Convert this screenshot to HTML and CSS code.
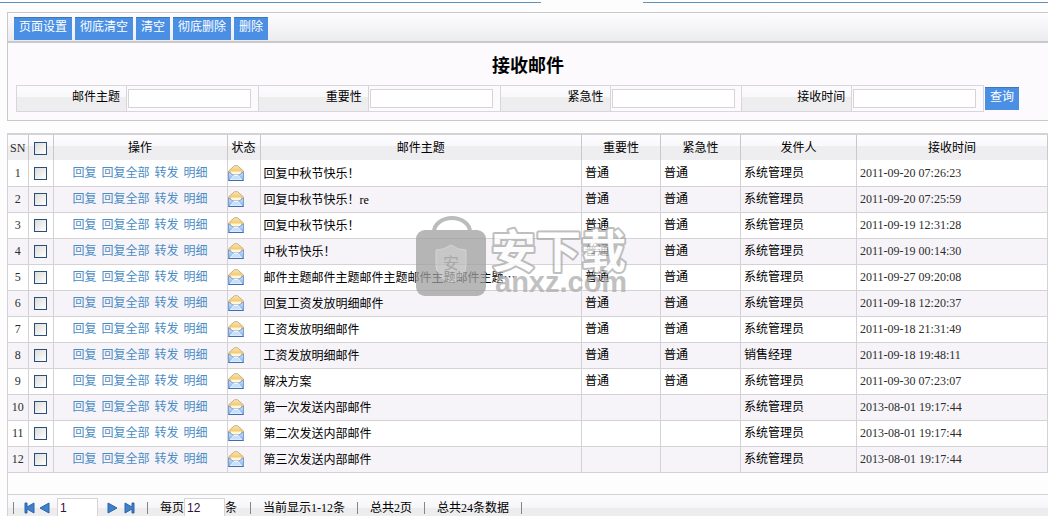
FILE: index.html
```html
<!DOCTYPE html>
<html lang="zh-CN">
<head>
<meta charset="utf-8">
<title>接收邮件</title>
<link rel="stylesheet" href="styles.css">
</head>
<body>
<svg class="defs" aria-hidden="true">
  <defs>
    <linearGradient id="flap" x1="0" y1="0" x2="0" y2="1"><stop offset="0" stop-color="#fbe6b0"/><stop offset=".5" stop-color="#f0c060"/></linearGradient>
    <linearGradient id="paper" x1="0" y1="0" x2="0" y2="1"><stop offset="0" stop-color="#d4e6fb"/><stop offset="1" stop-color="#74a9ec"/></linearGradient>
    <symbol id="mail" viewBox="0 0 16 16">
      <path d="M.5 6 6.500 .7h3L15.500 6v9H.5z" fill="url(#flap)" stroke="#c3b08c"/>
      <path d="M3 6.500h10v4H3z" fill="#fff6dc"/>
      <path d="M.5 7 5 10h6l4.500-3v8.500H.5z" fill="url(#paper)" stroke="#7b9fd2"/>
      <path d="M2 15 6 10.500h4L14 15z" fill="#c5defa" stroke="#f0f7ff"/>
      <path d="M.5 15.500h15" stroke="#3f6db0"/>
    </symbol>
  </defs>
</svg>
<div class="topline"><span class="topline-left"></span><span class="topline-right"></span></div>
<main class="page">
  <section class="panel">
    <div class="toolbar">
      <button class="btn" type="button">页面设置</button>
      <button class="btn" type="button">彻底清空</button>
      <button class="btn" type="button">清空</button>
      <button class="btn" type="button">彻底删除</button>
      <button class="btn" type="button">删除</button>
    </div>
    <h1 class="title">接收邮件</h1>
    <form class="search">
      <div class="fields">
        <div class="field"><label class="field-label" for="f1">邮件主题</label><input class="field-input" id="f1" type="text"></div>
        <div class="field"><label class="field-label" for="f2">重要性</label><input class="field-input" id="f2" type="text"></div>
        <div class="field"><label class="field-label" for="f3">紧急性</label><input class="field-input" id="f3" type="text"></div>
        <div class="field"><label class="field-label" for="f4">接收时间</label><input class="field-input" id="f4" type="text"></div>
      </div>
      <button class="btn" type="button">查询</button>
    </form>
  </section>

  <section class="list">
    <table class="mails">
      <colgroup><col class="c-sn"><col class="c-check"><col class="c-ops"><col class="c-state"><col><col class="c-level"><col class="c-urgent"><col class="c-from"><col class="c-time"></colgroup>
      <thead>
        <tr><th class="sn">SN</th><th><input class="check" type="checkbox" aria-label="全选"></th><th>操作</th><th>状态</th><th>邮件主题</th><th>重要性</th><th>紧急性</th><th>发件人</th><th>接收时间</th></tr>
      </thead>
      <tbody>
        <tr><td class="mid sn">1</td><td class="mid"><input class="check" type="checkbox" aria-label="选择 1"></td><td><div class="ops"><a href="#">回复</a><a href="#">回复全部</a><a href="#">转发</a><a href="#">明细</a></div></td><td class="state"><svg class="mail"><use href="#mail"/></svg></td><td class="cjk">回复中秋节快乐！</td><td>普通</td><td>普通</td><td>系统管理员</td><td class="time">2011-09-20 07:26:23</td></tr>
        <tr><td class="mid sn">2</td><td class="mid"><input class="check" type="checkbox" aria-label="选择 2"></td><td><div class="ops"><a href="#">回复</a><a href="#">回复全部</a><a href="#">转发</a><a href="#">明细</a></div></td><td class="state"><svg class="mail"><use href="#mail"/></svg></td><td class="cjk">回复中秋节快乐！<span class="latin">re</span></td><td>普通</td><td>普通</td><td>系统管理员</td><td class="time">2011-09-20 07:25:59</td></tr>
        <tr><td class="mid sn">3</td><td class="mid"><input class="check" type="checkbox" aria-label="选择 3"></td><td><div class="ops"><a href="#">回复</a><a href="#">回复全部</a><a href="#">转发</a><a href="#">明细</a></div></td><td class="state"><svg class="mail"><use href="#mail"/></svg></td><td class="cjk">回复中秋节快乐！</td><td>普通</td><td>普通</td><td>系统管理员</td><td class="time">2011-09-19 12:31:28</td></tr>
        <tr><td class="mid sn">4</td><td class="mid"><input class="check" type="checkbox" aria-label="选择 4"></td><td><div class="ops"><a href="#">回复</a><a href="#">回复全部</a><a href="#">转发</a><a href="#">明细</a></div></td><td class="state"><svg class="mail"><use href="#mail"/></svg></td><td class="cjk">中秋节快乐！</td><td>普通</td><td>普通</td><td>系统管理员</td><td class="time">2011-09-19 00:14:30</td></tr>
        <tr><td class="mid sn">5</td><td class="mid"><input class="check" type="checkbox" aria-label="选择 5"></td><td><div class="ops"><a href="#">回复</a><a href="#">回复全部</a><a href="#">转发</a><a href="#">明细</a></div></td><td class="state"><svg class="mail"><use href="#mail"/></svg></td><td class="cjk">邮件主题邮件主题邮件主题邮件主题邮件主题…</td><td>普通</td><td>普通</td><td>系统管理员</td><td class="time">2011-09-27 09:20:08</td></tr>
        <tr><td class="mid sn">6</td><td class="mid"><input class="check" type="checkbox" aria-label="选择 6"></td><td><div class="ops"><a href="#">回复</a><a href="#">回复全部</a><a href="#">转发</a><a href="#">明细</a></div></td><td class="state"><svg class="mail"><use href="#mail"/></svg></td><td class="cjk">回复工资发放明细邮件</td><td>普通</td><td>普通</td><td>系统管理员</td><td class="time">2011-09-18 12:20:37</td></tr>
        <tr><td class="mid sn">7</td><td class="mid"><input class="check" type="checkbox" aria-label="选择 7"></td><td><div class="ops"><a href="#">回复</a><a href="#">回复全部</a><a href="#">转发</a><a href="#">明细</a></div></td><td class="state"><svg class="mail"><use href="#mail"/></svg></td><td class="cjk">工资发放明细邮件</td><td>普通</td><td>普通</td><td>系统管理员</td><td class="time">2011-09-18 21:31:49</td></tr>
        <tr><td class="mid sn">8</td><td class="mid"><input class="check" type="checkbox" aria-label="选择 8"></td><td><div class="ops"><a href="#">回复</a><a href="#">回复全部</a><a href="#">转发</a><a href="#">明细</a></div></td><td class="state"><svg class="mail"><use href="#mail"/></svg></td><td class="cjk">工资发放明细邮件</td><td>普通</td><td>普通</td><td>销售经理</td><td class="time">2011-09-18 19:48:11</td></tr>
        <tr><td class="mid sn">9</td><td class="mid"><input class="check" type="checkbox" aria-label="选择 9"></td><td><div class="ops"><a href="#">回复</a><a href="#">回复全部</a><a href="#">转发</a><a href="#">明细</a></div></td><td class="state"><svg class="mail"><use href="#mail"/></svg></td><td class="cjk">解决方案</td><td>普通</td><td>普通</td><td>系统管理员</td><td class="time">2011-09-30 07:23:07</td></tr>
        <tr><td class="mid sn">10</td><td class="mid"><input class="check" type="checkbox" aria-label="选择 10"></td><td><div class="ops"><a href="#">回复</a><a href="#">回复全部</a><a href="#">转发</a><a href="#">明细</a></div></td><td class="state"><svg class="mail"><use href="#mail"/></svg></td><td class="cjk">第一次发送内部邮件</td><td></td><td></td><td>系统管理员</td><td class="time">2013-08-01 19:17:44</td></tr>
        <tr><td class="mid sn">11</td><td class="mid"><input class="check" type="checkbox" aria-label="选择 11"></td><td><div class="ops"><a href="#">回复</a><a href="#">回复全部</a><a href="#">转发</a><a href="#">明细</a></div></td><td class="state"><svg class="mail"><use href="#mail"/></svg></td><td class="cjk">第二次发送内部邮件</td><td></td><td></td><td>系统管理员</td><td class="time">2013-08-01 19:17:44</td></tr>
        <tr><td class="mid sn">12</td><td class="mid"><input class="check" type="checkbox" aria-label="选择 12"></td><td><div class="ops"><a href="#">回复</a><a href="#">回复全部</a><a href="#">转发</a><a href="#">明细</a></div></td><td class="state"><svg class="mail"><use href="#mail"/></svg></td><td class="cjk">第三次发送内部邮件</td><td></td><td></td><td>系统管理员</td><td class="time">2013-08-01 19:17:44</td></tr>
      </tbody>
    </table>

    <footer class="pager">
      <span class="sep"></span>
      <div class="nav nav-prev">
        <button class="nav-btn" type="button" aria-label="首页"><svg class="arrow" viewBox="0 0 11 12"><path d="M1 1h2v4l7-4v10L3 7v4H1z"/></svg></button>
        <button class="nav-btn" type="button" aria-label="上一页"><svg class="arrow" viewBox="0 0 11 12"><path d="M10 1v10L1 6z"/></svg></button>
      </div>
      <input class="page-input" type="text" value="1" aria-label="页码">
      <div class="nav nav-next">
        <button class="nav-btn" type="button" aria-label="下一页"><svg class="arrow" viewBox="0 0 11 12"><path d="M1 1v10l9-5z"/></svg></button>
        <button class="nav-btn" type="button" aria-label="末页"><svg class="arrow" viewBox="0 0 11 12"><path d="M10 1H8v4L1 1v10l7-4v4h2z"/></svg></button>
      </div>
      <span class="sep"></span>
      <div class="size"><label for="size">每页</label><input class="page-input" id="size" type="text" value="12"><span>条</span></div>
      <span class="sep"></span>
      <span class="info">当前显示1-12条</span>
      <span class="sep"></span>
      <span class="info">总共2页</span>
      <span class="sep"></span>
      <span class="info">总共24条数据</span>
      <span class="sep"></span>
    </footer>
  </section>
</main>

<svg class="watermark" viewBox="0 0 216 84" aria-hidden="true">
  <path d="M18 17a18 14 0 0 1 36 0" fill="none" stroke="#a6a6a6" stroke-width="4"/>
  <rect x="0" y="15" width="70" height="66" rx="9" fill="#a0a0a0"/>
  <path d="M20 35q8 0 15-5 7 5 15 5v15q0 12-15 18-15-6-15-18z" fill="#b9b9b9" stroke="#c9c9c9"/>
  <text class="wm-seal" x="27" y="54">安</text>
  <text class="wm-name" x="75" y="53">安下载</text>
  <text class="wm-site" x="79" y="77">anxz.com</text>
</svg>
</body>
</html>
```

FILE: styles.css
```css
* { box-sizing: border-box; }

body {
  margin: 0;
  overflow: hidden;
  background: #fdfdfe;
  color: #000;
  font: 12px/16px "Liberation Serif", "Noto Sans CJK SC", serif;
}

button, input { font-family: inherit; }

.defs { position: absolute; width: 0; height: 0; }

.topline { display: flex; justify-content: space-between; padding-top: 2px; height: 12px; }
.topline-left, .topline-right { height: 1px; background: #6091bb; }
.topline-left { width: 541px; }
.topline-right { width: 405px; }

.page { padding-left: 7px; }

.panel { border: solid #c9c8ca; border-width: 1px 0 1px 1px; background: #fcfafd; padding-bottom: 8px; }

.toolbar {
  display: flex;
  gap: 3px;
  height: 30px;
  padding: 4px 6px 0;
  border-bottom: 2px solid #c9c8ca;
  background: linear-gradient(#fdfcfe, #ececee);
}

.btn {
  flex: none;
  height: 23px;
  padding: 0 5px 4px;
  border: 0;
  border-top: 1px solid #3c78b5;
  background: #4a8fe4;
  color: #fff;
  font-size: 12px;
  line-height: 16px;
}

.title { margin: 0; padding: 12px 0 7px; font-size: 18px; line-height: 23px; text-align: center; }

.search { display: flex; align-items: center; gap: 1px; padding: 0 29px 0 8px; }
.fields { display: flex; flex: 1; border: solid #d8d6da; border-width: 1px 0 1px 1px; }
.field { display: flex; align-items: center; flex: 1; height: 25px; border-right: 1px solid #d8d6da; }
.field-label {
  width: 110px;
  height: 25px;
  padding: 3px 6px 0 0;
  border-right: 1px solid #d8d6da;
  background: linear-gradient(#fcfbfd 0, #f8f7f9 45%, #ededee 46%, #eeedef 100%);
  text-align: right;
}
.field-input { width: 123px; height: 19px; margin-left: 1px; border: 1px solid #d6d4d8; background: #fff; }

.list { margin-top: 12px; border-left: 1px solid #d4d2d5; }

.mails { width: 100%; table-layout: fixed; border-collapse: collapse; border-top: 2px solid #d4d2d5; background: #fff; }
.c-sn { width: 20px; }
.c-check { width: 25px; }
.c-ops { width: 174px; }
.c-state { width: 33px; }
.c-level { width: 79px; }
.c-urgent { width: 80px; }
.c-from { width: 116px; }
.c-time { width: 191px; }

.mails th {
  height: 26px;
  padding: 0;
  border-right: 1px solid #c9c7ca;
  background: linear-gradient(#fdfcfe 0, #f8f7f9 45%, #eeedef 46%, #eeedef 100%);
  font-weight: normal;
  white-space: nowrap;
}
.mails td {
  height: 26px;
  padding: 0 3px;
  border-right: 1px solid #d4d2d5;
  border-bottom: 1px solid #d4d2d5;
  white-space: nowrap;
}
.mails tbody tr:nth-child(even) { background: #f6f4f8; }
.mails .mid { padding: 0; text-align: center; }
.mails .state { padding: 0; }
.mails .sn, .mails .time { color: #2c2c2c; }
.cjk { font-family: "Noto Sans CJK SC", sans-serif; }
.latin { font-family: "Liberation Serif", serif; }

.check {
  display: block;
  appearance: none;
  width: 13px;
  height: 13px;
  margin: 1px auto 0;
  border: 1px solid #294f78;
  background: linear-gradient(135deg, #dcdcd9, #fff);
}
.ops { display: flex; justify-content: center; gap: 5px; }
.ops a { color: #4a8cc4; text-decoration: none; }
.mail { display: block; width: 16px; height: 16px; }

.pager {
  display: flex;
  align-items: center;
  height: 27px;
  margin-top: 21px;
  padding-left: 5px;
  border-top: 1px solid #d4d2d5;
  background: linear-gradient(#fcfbfd 0, #f6f5f7 50%, #ececee 51%, #eee 100%);
  white-space: nowrap;
}
.sep { width: 1px; height: 12px; background: #858585; }
.nav { display: flex; gap: 4px; }
.nav-prev { padding: 0 7px 0 10px; }
.nav-next { padding: 0 12px 0 9px; gap: 6px; }
.nav-btn { padding: 0; border: 0; background: none; }
.arrow { display: block; width: 11px; height: 12px; fill: #3f7fcb; stroke: #2b65ac; }
.page-input {
  width: 41px;
  height: 20px;
  padding: 0 2px;
  border: 1px solid #d6d4d8;
  background: #fff;
  color: #301040;
  font: 12px "Liberation Sans", sans-serif;
}
.size { display: flex; align-items: center; padding: 0 13px 0 12px; }
.info { padding: 0 12px; }

.watermark { position: absolute; left: 416px; top: 215px; width: 216px; height: 84px; opacity: .75; pointer-events: none; }
.wm-seal { font: 16px "Noto Sans CJK SC", sans-serif; fill: #8e8e8e; }
.wm-name {
  font: bold 45px "Noto Sans CJK SC", sans-serif;
  fill: #fff;
  paint-order: stroke;
  stroke: #aaa;
  stroke-width: 4px;
  stroke-linejoin: round;
}
.wm-site { font: bold 29px "Liberation Sans", sans-serif; fill: #adadad; }
```
